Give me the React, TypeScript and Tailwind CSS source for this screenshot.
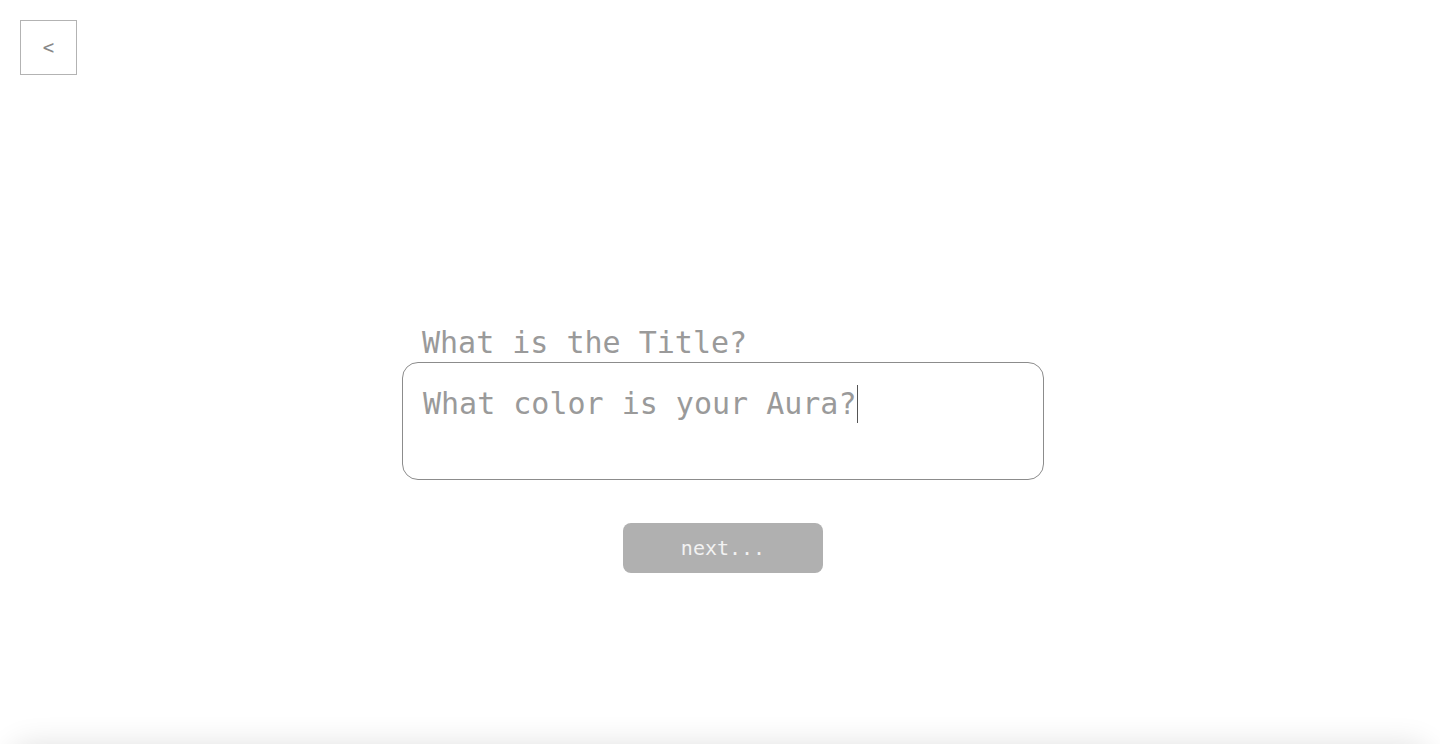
import React from "react";

export default function App() {
  const mono = { fontFamily: '"DejaVu Sans Mono", "Liberation Mono", monospace' };
  return (
    <div className="bg-white" style={mono}>
      <section className="relative h-[744px] w-full overflow-hidden">
        <div className="p-5">
          <button className="flex h-[55px] w-[57px] items-center justify-center border border-[#b3b3b3] bg-white text-[19px] text-[#888]">
            &lt;
          </button>
        </div>
        <div className="flex flex-col items-center pl-[6px] pt-[230px]">
          <div className="w-[642px]">
            <div className="pl-5 text-[30px] leading-[36px] text-[#9a9a9a]">
              What is the Title?
            </div>
            <div className="mt-[1px] h-[118px] rounded-[16px] border border-[#8c8c8c] px-5 pt-[21px]">
              <div className="flex items-center text-[30px] leading-[40px] text-[#9a9a9a]">
                <span>What color is your Aura?</span>
                <span className="ml-[1px] inline-block h-[38px] w-px bg-[#555]" />
              </div>
            </div>
          </div>
          <button className="mt-[43px] flex h-[50px] w-[200px] items-center justify-center rounded-[8px] bg-[#b0b0b0] text-[20px] text-[#f2f2f2]">
            next...
          </button>
        </div>
      </section>
      <section className="mx-[10px] h-[200px] rounded-[20px] bg-white shadow-[0_0_30px_rgba(0,0,0,0.12)]" />
    </div>
  );
}
